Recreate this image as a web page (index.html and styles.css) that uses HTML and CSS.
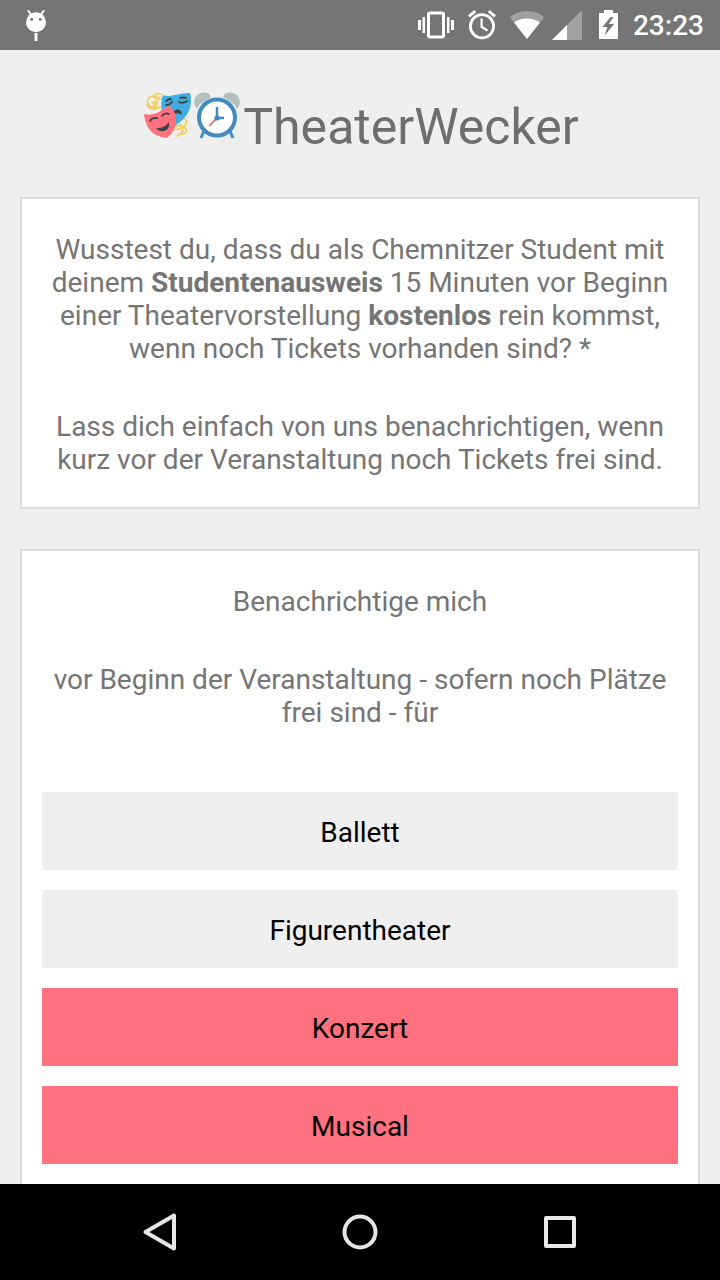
FILE: index.html
```html
<!DOCTYPE html>
<html lang="de">
<head>
<meta charset="utf-8">
<meta name="viewport" content="width=device-width, initial-scale=1">
<title>TheaterWecker</title>
<link rel="stylesheet" href="styles.css">
</head>
<body>
<div class="screen">
  <header class="status">
    <svg class="status-notice" width="24" height="34" viewBox="24 8 24 34" aria-hidden="true">
      <g stroke="#fff" stroke-width="2" stroke-linecap="round"><path d="M28.300 11l2.400 3M43.700 11l-2.400 3"/></g>
      <circle cx="36" cy="22.200" r="10" fill="#fff"/>
      <circle cx="31.700" cy="19.500" r="1.400" fill="#757575"/><circle cx="40.300" cy="19.500" r="1.400" fill="#757575"/>
      <path d="M34.500 33h3v8h-3z" fill="#fff"/>
    </svg>
    <div class="status-icons">
      <svg width="36" height="34" viewBox="419 8 36 34" aria-hidden="true">
        <rect x="429.500" y="13" width="15" height="24" rx="1.500" fill="none" stroke="#fff" stroke-width="3"/>
        <path d="M419 20h3v10h-3zM423.500 17h2.500v16h-2.500zM448 17h2.500v16h-2.500zM452 20h3v10h-3z" fill="#fff"/>
      </svg>
      <svg width="28" height="34" viewBox="469 8 28 34" aria-hidden="true">
        <g fill="none" stroke="#fff"><circle cx="483" cy="26.200" r="11.600" stroke-width="2.800"/><path d="M469.900 16.300l6.400-5.200M496.100 16.300l-6.400-5.200" stroke-width="2.800"/><path d="M482.600 18.500v8.300l6 3.800" stroke-width="2.200"/></g>
      </svg>
      <div class="status-network">
        <svg width="35" height="34" viewBox="511 8 35 34" aria-hidden="true">
          <path d="M528 39L511 17.200Q518 11 528 11T545.300 17.200z" fill="#a1a1a1"/>
          <path d="M528 39L515 22.500Q521 18.500 528 18.500T541 22.500z" fill="#fff"/>
        </svg>
        <svg width="30" height="34" viewBox="553 8 30 34" aria-hidden="true">
          <path d="M583 10v30h-30z" fill="#a1a1a1"/><path d="M568 25v15h-15z" fill="#fff"/>
        </svg>
      </div>
      <svg class="status-battery" width="20" height="34" viewBox="600 8 20 34" aria-hidden="true">
        <path d="M600 13h5v-3h9v3h5v26h-19z" fill="#fff"/><path d="M611.500 17l-8 10h4.800l-2.600 8.500 9.300-11.500h-5.200l4.700-7z" fill="#757575"/>
      </svg>
      <time class="clock">23:23</time>
    </div>
  </header>

  <main class="page">
    <h1 class="title">
      <svg class="emoji" width="50" height="48" viewBox="145 91 50 48" aria-hidden="true">
        <g fill="none" stroke="#f5cd5b" stroke-width="1.700" stroke-linecap="round">
          <path d="M163 94c-4-1-8 1-7 3s4 1 6 0M158 97c-6-3-10 3-8 7s8 5 9 1-4-4-5-2M149 105c2 5 8 5 13 2M164 99c-6 0-8 4-8 9"/>
          <path d="M184 119c4-1 6 3 3 6s-9 6-12 4 1-5 4-3M182 124c4 4 4 9-3 12M173 129c4-5 13-4 15 0s-3 6-7 5"/>
        </g>
        <path d="M165 95q4 2 12 0 8-2 15-2 2 7 0 15-3 10-14 17-12-4-14-14-2-8 1-16z" fill="#42ade2"/>
        <g fill="none" stroke="#3e4347" stroke-width="1.800" stroke-linecap="round"><path d="M168 105q4 0 6-3M181 102q4 2 8-1M168 101q2-2 5-2M182 98q3-1 6 0"/></g>
        <path d="M174 116c0-8 10-9 10-1q-5-4-10 1z" fill="#3e4347"/>
        <path d="M146 114q7 2 15-2 6-5 11-6 6 6 6 14 0 11-9 18-12-1-18-9-4-6-5-15z" fill="#ff717f"/>
        <g fill="none" stroke="#3e4347" stroke-width="1.800" stroke-linecap="round"><path d="M152 121q2-4 7-3M164 116q3-4 7-2"/></g>
        <path d="M158 128q8 1 13-6 1 8-5 9-5 1-8-3z" fill="#3e4347"/>
      </svg><svg class="emoji" width="50" height="48" viewBox="195 91 50 48" aria-hidden="true">
        <g fill="#b2c1c0"><path d="M197 106c-4-9 7-18 15-11l1 2-12 8-2 4z"/><path d="M241 106c4-9-7-18-15-11l-1 2 12 8 2 4z"/></g>
        <path d="M206 131l-3 7M232 131l3 7" stroke="#428bc1" stroke-width="3"/>
        <circle cx="219" cy="117.500" r="18" fill="#fff" stroke="#428bc1" stroke-width="4"/>
        <path d="M218 119l-7 7" stroke="#ed4c5c" stroke-width="1.500"/>
        <path d="M219 107v11h7" fill="none" stroke="#428bc1" stroke-width="2.500"/><circle cx="219" cy="118" r="2.600" fill="#428bc1"/>
      </svg><span class="title-text">TheaterWecker</span>
    </h1>

    <section class="card">
      <p>Wusstest du, dass du als Chemnitzer Student mit deinem <strong>Studentenausweis</strong> 15 Minuten vor Beginn einer Theatervorstellung <strong>kostenlos</strong> rein kommst, wenn noch Tickets vorhanden sind? *</p>
      <p>Lass dich einfach von uns benachrichtigen, wenn kurz vor der Veranstaltung noch Tickets frei sind.</p>
    </section>

    <section class="card">
      <p>Benachrichtige mich</p>
      <p>vor Beginn der Veranstaltung - sofern noch Plätze frei sind - für</p>
      <div class="choices">
        <button class="choice" type="button" aria-pressed="false">Ballett</button>
        <button class="choice" type="button" aria-pressed="false">Figurentheater</button>
        <button class="choice choice-on" type="button" aria-pressed="true">Konzert</button>
        <button class="choice choice-on" type="button" aria-pressed="true">Musical</button>
      </div>
    </section>
  </main>

  <nav class="navbar">
    <button class="nav-button" type="button" aria-label="Zurück"><svg width="40" height="40" viewBox="140 1212 40 40"><path d="M145.500 1232L174 1215.500v33z"/></svg></button>
    <button class="nav-button" type="button" aria-label="Startseite"><svg width="40" height="40" viewBox="340 1212 40 40"><circle cx="360" cy="1232" r="15.500"/></svg></button>
    <button class="nav-button" type="button" aria-label="Übersicht"><svg width="40" height="40" viewBox="540 1212 40 40"><rect x="546" y="1218" width="28" height="28"/></svg></button>
  </nav>
</div>
</body>
</html>
```
FILE: styles.css
```css
* {
  box-sizing: border-box;
}

body {
  margin: 0;
  background: #efefef;
  color: #757575;
  font-family: Roboto, "Noto Sans", sans-serif;
  font-size: 28px;
  line-height: 33px;
}

svg {
  display: block;
  flex: none;
}

.screen {
  display: flex;
  flex-direction: column;
  height: 100vh;
}

.status {
  display: flex;
  flex: none;
  align-items: center;
  justify-content: space-between;
  height: 50px;
  padding: 0 16px 0 24px;
  background: #757575;
  color: #fff;
}

.status-icons {
  display: flex;
  align-items: center;
  gap: 14px;
}

.status-network {
  display: flex;
  gap: 7px;
}

.status-battery {
  margin-left: 3px;
}

.clock {
  font-weight: 500;
}

.page {
  flex: 1;
  min-height: 0;
  padding: 0 20px;
  overflow: hidden;
}

.title {
  display: flex;
  justify-content: center;
  margin: 0;
  padding: 41px 0 40px 2px;
  font-size: 50px;
  font-weight: 400;
  line-height: 60px;
  color: #6e6e6e;
}

.title-text {
  padding-top: 6px;
}

.card {
  margin-bottom: 40px;
  padding: 34px 20px 31px;
  border: 2px solid #dcdcdc;
  background: #fff;
  text-align: center;
}

.card p {
  margin: 0;
}

.card p + p {
  margin-top: 45px;
}

.choices {
  display: flex;
  flex-direction: column;
  gap: 20px;
  margin-top: 63px;
}

.choice {
  height: 78px;
  padding: 2px 0 0;
  border: 0;
  border-radius: 0;
  background: #efefef;
  color: #000;
  font: inherit;
}

.choice-on {
  background: #ff717f;
}

.navbar {
  display: flex;
  flex: none;
  justify-content: center;
  height: 96px;
  padding: 0 60px;
  background: #000;
}

.nav-button {
  display: flex;
  flex: 1;
  align-items: center;
  justify-content: center;
  padding: 0;
  border: 0;
  background: none;
}

.nav-button svg {
  fill: none;
  stroke: #e6e6e6;
  stroke-width: 4px;
  stroke-linejoin: round;
}
```
